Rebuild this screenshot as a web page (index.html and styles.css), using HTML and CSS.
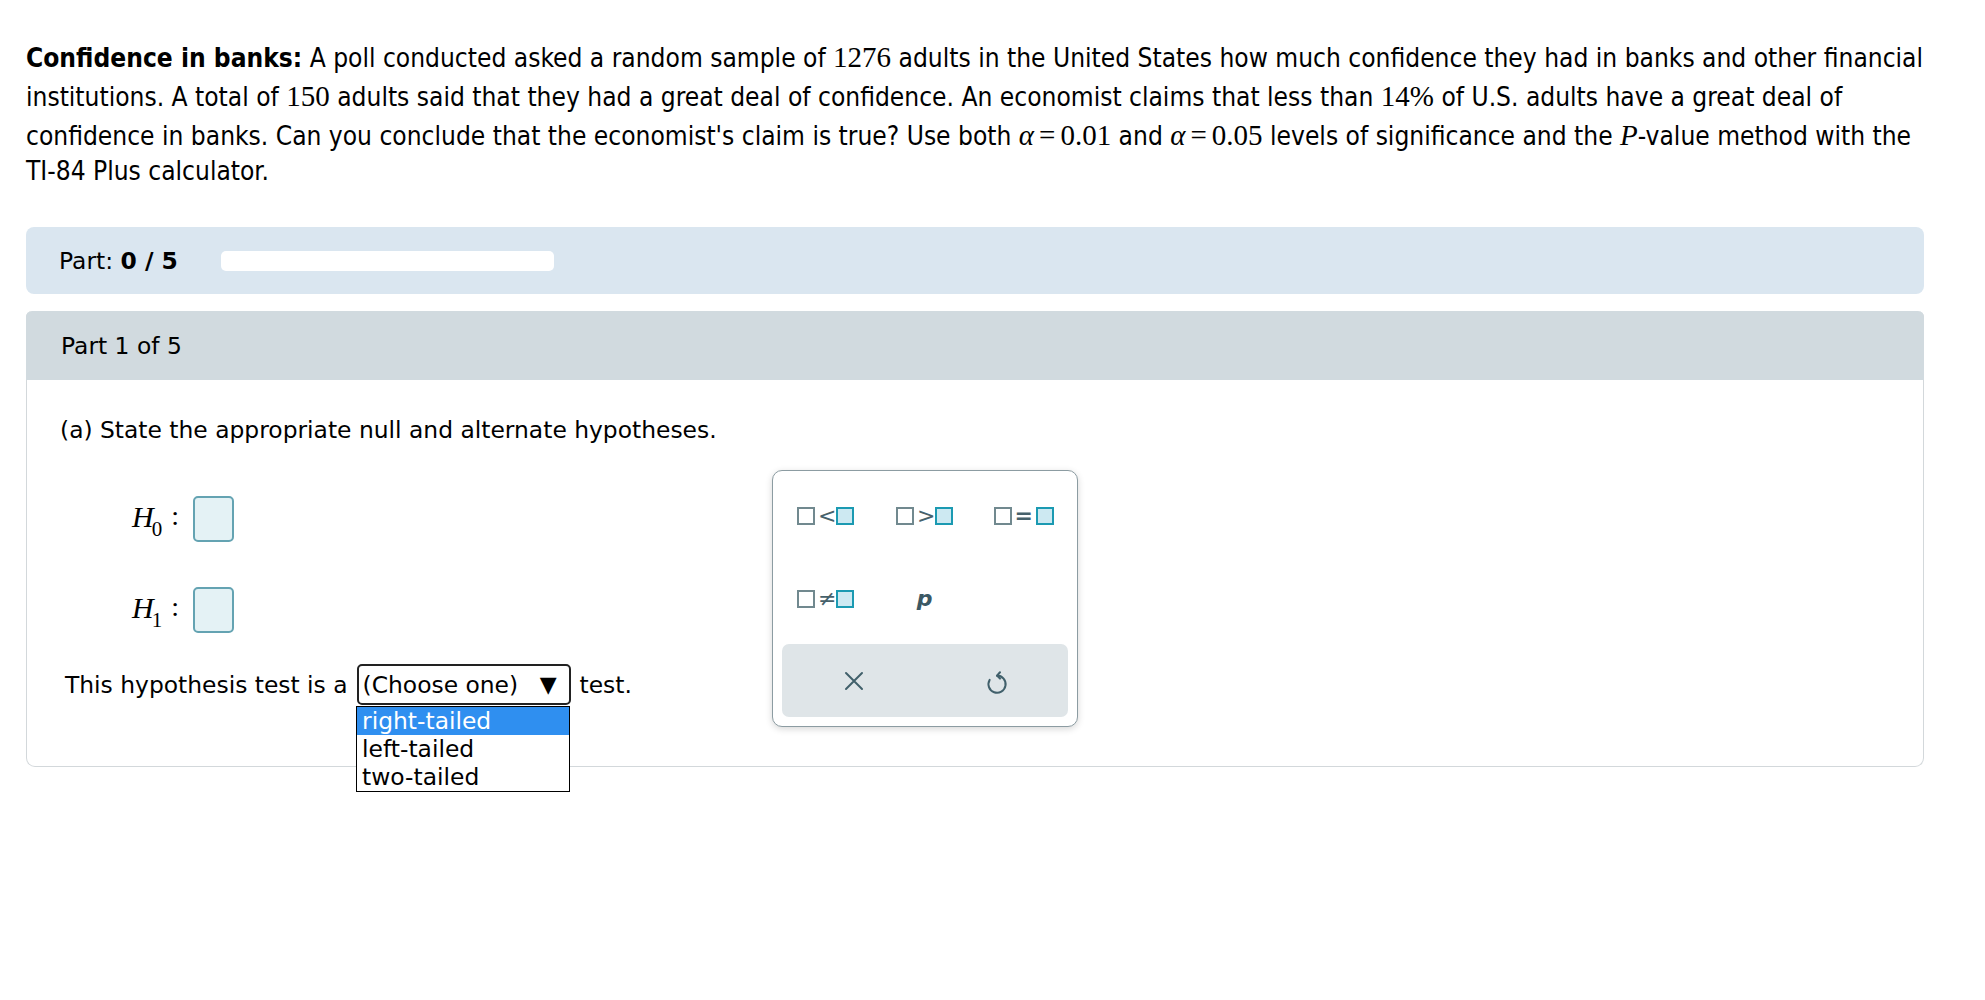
FILE: index.html
```html
<!DOCTYPE html>
<html lang="en">
<head>
<meta charset="utf-8">
<title>Confidence in banks</title>
<link rel="stylesheet" href="styles.css">
</head>
<body>
<div class="page">
  <p class="intro"><b>Confidence in banks:</b> A poll conducted asked a random sample of <span class="m">1276</span> adults in the United States how much confidence they had in banks and other financial institutions. A total of <span class="m">150</span> adults said that they had a great deal of confidence. An economist claims that less than <span class="m">14%</span> of U.S. adults have a great deal of confidence in banks. Can you conclude that the economist's claim is true? Use both <span class="m"><span class="mi">α</span><span class="eq">=</span>0.01</span> and <span class="m"><span class="mi">α</span><span class="eq">=</span>0.05</span> levels of significance and the <span class="m"><span class="mi">P</span></span>-value method with the TI-84 Plus calculator.</p>

  <div class="progress">
    <span class="progress-label">Part: <b>0 / 5</b></span>
    <div class="track"></div>
  </div>

  <div class="card">
    <div class="card-head">Part 1 of 5</div>
    <div class="card-body">
      <p class="q">(a) State the appropriate null and alternate hypotheses.</p>
      <div class="hyp">
        <span class="hlabel"><span class="hv">H</span><span class="hs">0</span></span><span class="colon">:</span><span class="box"></span>
      </div>
      <div class="hyp hyp2">
        <span class="hlabel"><span class="hv">H</span><span class="hs">1</span></span><span class="colon">:</span><span class="box"></span>
      </div>
      <div class="test-line">
        <span>This hypothesis test is a</span>
        <span class="select">
          <span class="select-text">(Choose one)</span><span class="arrow">▼</span>
          <span class="options">
            <span class="opt active">right-tailed</span>
            <span class="opt">left-tailed</span>
            <span class="opt">two-tailed</span>
          </span>
        </span>
        <span>test.</span>
      </div>
    </div>

    <div class="palette">
      <div class="pgrid">
        <div class="pbtn"><span class="sq"></span><span class="opc">&lt;</span><span class="sq fill"></span></div>
        <div class="pbtn"><span class="sq"></span><span class="opc">&gt;</span><span class="sq fill"></span></div>
        <div class="pbtn"><span class="sq"></span><span class="opc eqc">=</span><span class="sq fill"></span></div>
        <div class="pbtn"><span class="sq"></span><span class="opc">≠</span><span class="sq fill"></span></div>
        <div class="pbtn"><span class="pvar">p</span></div>
        <div class="pbtn"></div>
      </div>
      <div class="pbar">
        <div class="pact">
          <svg width="22" height="22" viewBox="0 0 22 22"><path d="M3 3 L19 19 M19 3 L3 19" stroke="#41606b" stroke-width="2" stroke-linecap="round" fill="none"/></svg>
        </div>
        <div class="pact">
          <svg width="26" height="30" viewBox="0 0 24 28"><path d="M12 9 A8 8 0 1 1 5.1 13" stroke="#41606b" stroke-width="1.9" stroke-linecap="round" fill="none"/><path d="M14.8 5.8 L12 9 L14.8 11.8" stroke="#41606b" stroke-width="1.9" stroke-linecap="round" stroke-linejoin="round" fill="none"/></svg>
        </div>
      </div>
    </div>
  </div>
</div>
</body>
</html>
```

FILE: styles.css
```css
html, body {
  margin: 0;
  padding: 0;
  background: #ffffff;
}

body {
  font-family: "DejaVu Sans", Verdana, sans-serif;
  color: #000000;
}

.page {
  padding: 0 61px 0 26px;
  min-height: 1000px;
  box-sizing: border-box;
}

.intro {
  margin: 0;
  padding-top: 38px;
  font-family: "DejaVu Sans Condensed", "DejaVu Sans", sans-serif;
  font-stretch: condensed;
  font-size: 26.1px;
  line-height: 32px;
}

.intro b {
  font-weight: bold;
}

.m {
  font-family: "Liberation Serif", "Times New Roman", serif;
  font-size: 29px;
  line-height: 1.35;
  font-stretch: normal;
}

.mi {
  font-style: italic;
}

.eq {
  margin: 0 5px;
}

.progress {
  margin-top: 40px;
  height: 67px;
  background: #dae6f0;
  border-radius: 8px;
  display: flex;
  align-items: center;
  padding-left: 33px;
  font-size: 23.4px;
}

.progress-label b {
  font-weight: bold;
}

.track {
  margin-left: 43px;
  width: 333px;
  height: 20px;
  background: #ffffff;
  border-radius: 5px;
}

.card {
  position: relative;
  margin-top: 17px;
  border: 1px solid #d3d8db;
  border-top: none;
  border-radius: 6px 6px 9px 9px;
  font-size: 23.4px;
}

.card-head {
  height: 69px;
  background: #d1dadf;
  border-radius: 6px 6px 0 0;
  margin: 0 -1px;
  display: flex;
  align-items: center;
  padding-left: 35px;
}

.card-body {
  padding: 35px 33px 61px 33px;
}

.q {
  margin: 0;
  line-height: 30px;
}

.hyp {
  margin-top: 51px;
  margin-left: 72px;
  display: flex;
  align-items: center;
  height: 46px;
}

.hyp2 {
  margin-top: 45px;
}

.hlabel {
  font-family: "Liberation Serif", "Times New Roman", serif;
  display: inline-flex;
  align-items: baseline;
  position: relative;
  top: -2px;
}

.hv {
  font-style: italic;
  font-size: 30px;
}

.hs {
  font-size: 21px;
  position: relative;
  top: 9px;
  margin-left: -2px;
}

.colon {
  font-family: "Liberation Serif", "Times New Roman", serif;
  font-size: 28px;
  margin-left: 9px;
  position: relative;
  top: -3px;
}

.box {
  margin-left: 14px;
  width: 37px;
  height: 42px;
  border: 2px solid #64a3b2;
  border-radius: 5px;
  background: #e4f2f5;
}

.test-line {
  margin-top: 31px;
  margin-left: 5px;
  display: flex;
  align-items: center;
  gap: 9px;
  height: 41px;
}

.select {
  position: relative;
  width: 214px;
  height: 41px;
  box-sizing: border-box;
  border: 2.5px solid #222222;
  border-radius: 5px;
  display: flex;
  align-items: center;
  padding: 0 12px 0 4px;
  justify-content: space-between;
}

.arrow {
  font-size: 22px;
}

.options {
  position: absolute;
  left: -2.5px;
  top: calc(100% + 3px);
  width: 214px;
  box-sizing: border-box;
  border: 1px solid #000000;
  background: #ffffff;
  display: flex;
  flex-direction: column;
  z-index: 2;
}

.opt {
  height: 28px;
  line-height: 28px;
  padding-left: 5px;
}

.opt.active {
  background: #2f8ff0;
  color: #ffffff;
}

.palette {
  position: absolute;
  left: 745px;
  top: 159px;
  width: 306px;
  height: 257px;
  box-sizing: border-box;
  border: 1px solid #8c9ca2;
  border-radius: 10px;
  background: #ffffff;
  box-shadow: 0 2px 7px rgba(0, 0, 0, 0.16);
  padding: 3px 9px 8px 9px;
  display: flex;
  flex-direction: column;
}

.pgrid {
  display: grid;
  grid-template-columns: repeat(3, 99px);
  grid-template-rows: repeat(2, 83px);
  margin: 0 -5px 0 -6px;
}

.pbtn {
  display: flex;
  align-items: center;
  justify-content: center;
  gap: 3px;
}

.sq {
  width: 14px;
  height: 14px;
  border: 2px solid #71898f;
  background: #ffffff;
}

.sq.fill {
  border-color: #1b9ab2;
  background: #cde9f2;
}

.opc {
  font-size: 22px;
  line-height: 1;
  color: #46616b;
  width: 15px;
  text-align: center;
}

.eqc {
  font-weight: bold;
  width: 18px;
}

.pvar {
  font-family: "DejaVu Sans", sans-serif;
  font-weight: bold;
  font-style: italic;
  font-size: 22px;
  color: #3b5864;
}

.pbar {
  margin-top: 4px;
  height: 73px;
  background: #dfe5e8;
  border-radius: 7px;
  display: flex;
}

.pact {
  flex: 1;
  display: flex;
  align-items: center;
  justify-content: center;
}
```
